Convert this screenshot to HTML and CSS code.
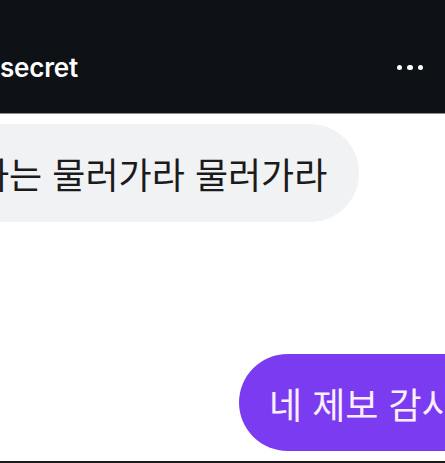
FILE: index.html
```html
<!DOCTYPE html>
<html lang="ko">
  <head>
    <meta charset="UTF-8" />
    <meta name="viewport" content="width=device-width, initial-scale=1.0" />
    <title>secret</title>
    <link rel="stylesheet" href="styles.css">
  </head>
  <body>
    <div class="screen">
      <header class="topbar">
        <span class="title">secret</span>
        <button class="more" aria-label="more">
          <span></span><span></span><span></span>
        </button>
      </header>

      <main class="thread">
        <div class="row row-in">
          <div class="bubble bubble-in">하는 물러가라 물러가라</div>
        </div>
        <div class="row row-out">
          <div class="bubble bubble-out">네 제보 감사합니다</div>
        </div>
      </main>

      <div class="bottom-bar"></div>
    </div>
  </body>
</html>
```

FILE: styles.css
```css
* {
  box-sizing: border-box;
  margin: 0;
  padding: 0;
}

html,
body {
  height: 100%;
  overflow: hidden;
}

body {
  background-color: #fff;
  font-family: "Noto Sans CJK KR", "Noto Sans", sans-serif;
}

.screen {
  height: 100%;
  display: flex;
  flex-direction: column;
}

.topbar {
  height: 114px;
  flex: none;
  background-color: #0e1116;
  border-bottom: 1px solid #8e8e8e;
  display: flex;
  align-items: center;
  justify-content: space-between;
  padding: 22px 22px 0 0;
}

.title {
  color: #fff;
  font-family: Inter, "Liberation Sans", sans-serif;
  font-size: 26px;
  font-weight: 600;
  letter-spacing: -0.2px;
}

.more {
  background: none;
  border: none;
  display: flex;
  gap: 5px;
  padding: 4px 0;
}

.more span {
  width: 5.5px;
  height: 5.5px;
  border-radius: 50%;
  background-color: #fff;
}

.thread {
  flex: 1;
  display: flex;
  flex-direction: column;
  gap: 132px;
  padding-top: 10px;
}

.row {
  display: flex;
}

.bubble {
  height: 98px;
  display: flex;
  align-items: center;
  border-radius: 49px;
  font-size: 36px;
  white-space: nowrap;
  padding: 0 32px;
}

.bubble-in {
  background-color: #f1f2f4;
  color: #1b1b1b;
  margin-left: -56px;
}

.bubble-out {
  background-color: #7b3cf1;
  color: #fbeffc;
  margin-left: 239px;
  height: 97px;
  padding-left: 30px;
}

.bottom-bar {
  height: 2px;
  flex: none;
  background-color: #1c1c1c;
}
```
